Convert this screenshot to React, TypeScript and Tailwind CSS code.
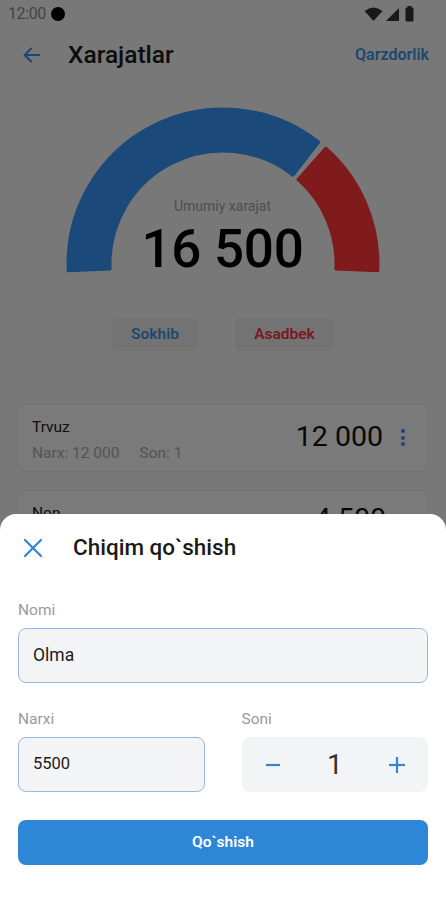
import React from "react";

const CX = 160.5;
const CY = 164;
const RO = 156.5;
const RI = 111.5;

function pt(r: number, deg: number) {
  const a = (deg * Math.PI) / 180;
  return [CX + r * Math.cos(a), CY - r * Math.sin(a)];
}

function sector(a1: number, a2: number, ro: number, ri: number) {
  const [x1, y1] = pt(ro, a1);
  const [x2, y2] = pt(ro, a2);
  const [x3, y3] = pt(ri, a2);
  const [x4, y4] = pt(ri, a1);
  const large = a1 - a2 > 180 ? 1 : 0;
  return `M ${x1} ${y1} A ${ro} ${ro} 0 ${large} 1 ${x2} ${y2} L ${x3} ${y3} A ${ri} ${ri} 0 ${large} 0 ${x4} ${y4} Z`;
}

function Gauge() {
  return (
    <svg width="320" height="176" viewBox="0 0 320 176">
      <path
        d={sector(182.5, 51.8, RO - 1.5, RI + 1.5)}
        fill="#3694f4"
        stroke="#3694f4"
        strokeWidth="3"
        strokeLinejoin="round"
      />
      <path
        d={sector(48.4, -2.5, RO - 1.5, RI + 1.5)}
        fill="#fe343a"
        stroke="#fe343a"
        strokeWidth="3"
        strokeLinejoin="round"
      />
    </svg>
  );
}

export default function App() {
  return (
    <div
      className="relative w-[446px] h-[900px] overflow-hidden bg-[#f0f0f0]"
      style={{ fontFamily: "Roboto, 'Noto Sans', sans-serif" }}
    >
      {/* Underlying page */}
      <div className="flex flex-col">
        {/* Status bar */}
        <div className="h-7 flex items-center justify-between pl-2 pr-[30px]">
          <div className="flex items-center gap-[5px]">
            <span className="text-[16px] text-[#8a8a8a] tracking-tight">12:00</span>
            <span className="w-[14px] h-[14px] rounded-full bg-black" />
          </div>
          <div className="flex items-center gap-[2px]">
            <svg width="19" height="15" viewBox="0 0 19 15">
              <path d="M0.5 4 Q9.5 -3 18.5 4 L9.5 14 Z" fill="#333" />
            </svg>
            <svg width="15" height="15" viewBox="0 0 15 15">
              <path d="M14 1 L14 14 L1 14 Z" fill="#333" />
            </svg>
            <svg width="12" height="16" viewBox="0 0 12 16" className="ml-[2px]">
              <rect x="3.5" y="0" width="4" height="2" fill="#333" />
              <rect x="1.5" y="1.5" width="8" height="14" rx="1" fill="#333" />
            </svg>
          </div>
        </div>

        {/* App bar */}
        <div className="h-[54px] flex items-center pl-[21px] pr-[17px]">
          <svg width="22" height="22" viewBox="0 0 24 24" fill="none" stroke="#3a8ee6" strokeWidth="2.2" strokeLinecap="round" strokeLinejoin="round">
            <path d="M20 12H4" />
            <path d="M11 5l-7 7 7 7" />
          </svg>
          <span className="ml-[25px] text-[24.5px] text-[#1a1a1a] font-medium">Xarajatlar</span>
          <span className="ml-auto text-[16px] font-semibold text-[#3a90e4]">Qarzdorlik</span>
        </div>

        {/* Gauge */}
        <div className="mt-[18px] flex justify-center">
          <div className="relative w-[320px] h-[176px] -translate-x-[0.5px]">
            <Gauge />
            <div className="absolute left-0 right-0 top-[96px] flex flex-col items-center">
              <span className="text-[14px] text-[#9e9e9e]">Umumiy xarajat</span>
              <span className="mt-[2px] text-[53px] leading-[60px] font-medium text-black tracking-[-0.3px]">16 500</span>
            </div>
          </div>
        </div>

        {/* Persons */}
        <div className="mt-[42px] flex justify-center gap-[37px]">
          <div className="h-[33px] w-[86px] rounded-[5px] bg-[#e6e6e6] flex items-center justify-center text-[15.5px] font-semibold text-[#3c8ee4]">
            Sokhib
          </div>
          <div className="h-[33px] w-[99px] rounded-[5px] bg-[#e6e6e6] flex items-center justify-center text-[15.5px] font-semibold text-[#f0343e]">
            Asadbek
          </div>
        </div>

        {/* Cards */}
        <div className="mt-[52px] mx-[17px] flex flex-col gap-[18px]">
          <div className="h-[69px] rounded-[8px] border border-[#e4e4e4] bg-[#f4f4f4] flex items-center pl-[14px] pr-[23px]">
            <div className="flex flex-col pt-[6px]">
              <span className="text-[15.5px] text-[#222]">Trvuz</span>
              <span className="mt-[3px] text-[15.5px] text-[#a8a8a8]">
                Narx: 12 000<span className="ml-[20px]">Son: 1</span>
              </span>
            </div>
            <span className="ml-auto text-[28.5px] text-[#111]">12 000</span>
            <div className="ml-[18px] flex flex-col gap-[2.5px]">
              <span className="w-[4px] h-[4px] rounded-full bg-[#3a8ee6]" />
              <span className="w-[4px] h-[4px] rounded-full bg-[#3a8ee6]" />
              <span className="w-[4px] h-[4px] rounded-full bg-[#3a8ee6]" />
            </div>
          </div>
          <div className="h-[69px] rounded-[8px] border border-[#e4e4e4] bg-[#f4f4f4] flex items-start pl-[14px] pr-[20px] pt-[11px]">
            <span className="text-[15.5px] text-[#222]">Non</span>
            <span className="ml-auto mt-[-4px] text-[28.5px] text-[#111] mr-[22px]">4 500</span>
          </div>
        </div>
      </div>

      {/* Scrim */}
      <div className="absolute inset-0 bg-black/50" />

      {/* Bottom sheet */}
      <div className="absolute left-0 right-0 bottom-0 h-[386px] bg-white rounded-t-[16px] px-[18px] pt-[20px] flex flex-col">
        <div className="h-[28px] flex items-center">
          <svg width="20" height="20" viewBox="0 0 20 20" className="ml-[5px]" stroke="#2f86d6" strokeWidth="2.2" strokeLinecap="round">
            <path d="M2 2L18 18" />
            <path d="M18 2L2 18" />
          </svg>
          <span className="ml-[30px] text-[22.5px] text-[#1a1a1a] font-medium">Chiqim qo`shish</span>
        </div>

        <span className="mt-[38px] h-5 leading-5 text-[15.5px] text-[#9a9a9a]">Nomi</span>
        <div className="mt-[8px] h-[55px] rounded-[8px] border border-[#96b8e2] bg-[#f3f4f6] flex items-center px-[14px] text-[17.5px] text-[#1a1a1a]">
          Olma
        </div>

        <div className="mt-[26px] grid grid-cols-2 gap-[37px]">
          <div className="flex flex-col">
            <span className="h-5 leading-5 text-[15.5px] text-[#9a9a9a]">Narxi</span>
            <div className="mt-[8px] h-[55px] rounded-[8px] border border-[#96b8e2] bg-[#f3f4f6] flex items-center px-[14px] text-[16.5px] text-[#1a1a1a]">
              5500
            </div>
          </div>
          <div className="flex flex-col">
            <span className="h-5 leading-5 text-[15.5px] text-[#9a9a9a]">Soni</span>
            <div className="mt-[8px] h-[55px] rounded-[8px] bg-[#f3f4f6] flex items-center justify-between px-[22px]">
              <svg width="18" height="18" viewBox="0 0 18 18" stroke="#2f86d6" strokeWidth="2.2">
                <path d="M2 9H16" />
              </svg>
              <span className="text-[28px] text-[#333]">1</span>
              <svg width="18" height="18" viewBox="0 0 18 18" stroke="#2f86d6" strokeWidth="2.2">
                <path d="M1 9H17" />
                <path d="M9 1V17" />
              </svg>
            </div>
          </div>
        </div>

        <div className="mt-[28px] h-[45px] rounded-[8px] bg-[#2e86d6] flex items-center justify-center text-[15.5px] font-semibold text-white">
          Qo`shish
        </div>
      </div>
    </div>
  );
}
